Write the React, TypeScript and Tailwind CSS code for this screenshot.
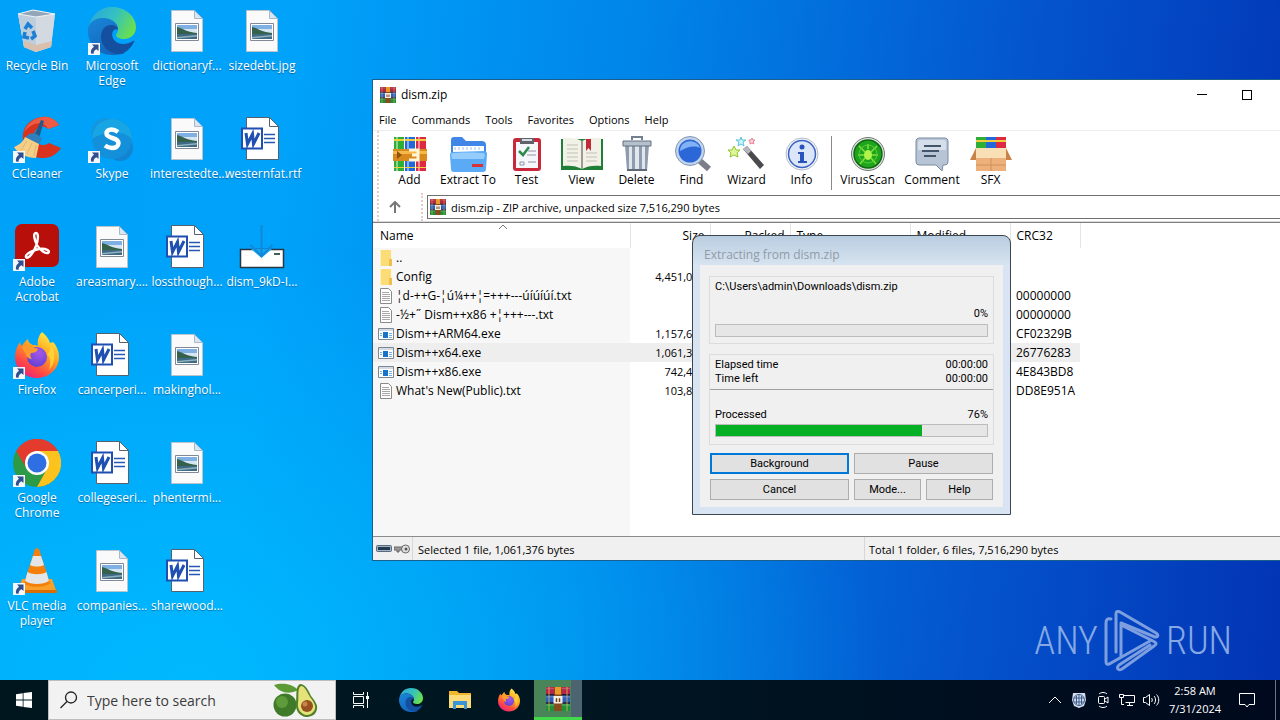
import type { ReactNode } from "react";

const UI_FONT = "font-['Open_Sans','Noto_Sans',sans-serif]";

/* ---------- shared icons ---------- */

function Shortcut() {
  return (
    <svg viewBox="0 0 12 12" className="absolute bottom-0 left-0 h-3 w-3">
      <path d="M0 0h12v12H0z" fill="#f4f8fd" />
      <path d="M4 1.500h6.500V8L8.500 6.200C6.500 7 5.500 8.300 5.600 10.800L3 10.500C2.400 7.500 3.800 5.200 6 3.800z" fill="#2f4f8e" />
    </svg>
  );
}

function EdgeIcon({ className }: { className: string }) {
  return (
    <svg viewBox="0 0 48 48" className={className}>
      <defs>
        <linearGradient id="edgeTop" x1="0" y1="0.2" x2="1" y2="0.6">
          <stop offset="0" stopColor="#2aa8dc" />
          <stop offset="0.5" stopColor="#35c1c0" />
          <stop offset="1" stopColor="#6be04a" />
        </linearGradient>
        <linearGradient id="edgeLeft" x1="0" y1="0" x2="0.5" y2="1">
          <stop offset="0" stopColor="#1a86d8" />
          <stop offset="1" stopColor="#1267bd" />
        </linearGradient>
      </defs>
      <path d="M1 20C3 8 12 0 24 0c14 0 24 10 24 20 0 8-6 12-12 12-5 0-8-2-8-4 0-1 2-2 2-6 0-6-7-11-15-11C8 11 2 15 1 20z" fill="url(#edgeTop)" />
      <path d="M0 24C0 15 7 11 15 11c8 0 15 5 15 11-3-3-10-1-10 7 0 9 8 17 17 17-3 1.500-8 2-13 2C10 48 0 37 0 24z" fill="url(#edgeLeft)" />
      <path d="M13 30c0-7 4-12 10-12 4 0 7 2 7 5-2-1-3-1-4 0-3 3-2 8 1 11 4 4 12 4 18 0 1-.500 2 0 1 1-4 8-10 12-15 12-10 0-18-8-18-17z" fill="#144fa0" />
    </svg>
  );
}

function FirefoxIcon({ className }: { className: string }) {
  return (
    <svg viewBox="0 0 48 48" className={className}>
      <defs>
        <linearGradient id="foxBody" x1="0.8" y1="0" x2="0.2" y2="1">
          <stop offset="0" stopColor="#fff24a" />
          <stop offset="0.4" stopColor="#ffa51f" />
          <stop offset="0.75" stopColor="#ff4647" />
          <stop offset="1" stopColor="#e61c8a" />
        </linearGradient>
        <radialGradient id="foxGlobe" cx="0.6" cy="0.3" r="0.8">
          <stop offset="0" stopColor="#a657e8" />
          <stop offset="1" stopColor="#5b3fd0" />
        </radialGradient>
      </defs>
      <path d="M29 1c4 3 7 7 8 11 2-1 3-1 3-1 4 4 6 10 6 15 0 12-10 21-22 21S2 38 2 26c0-6 2-11 5-15 0 2 1 3 2 4 1-2 3-5 6-7 0 3 2 5 5 6 2 0 4 0 5 1-1-6 1-11 4-14z" fill="url(#foxBody)" />
      <circle cx="24" cy="26" r="10" fill="url(#foxGlobe)" />
      <path d="M9 15c3-1 7 0 10 2 3 0 5 0 6 1-1 3-4 4-7 4-1 2-1 4 1 6-4 0-6-3-6-5-2-2-3-5-4-8z" fill="#ff9a2b" />
      <path d="M37 12c6 9 6 20-1 27 2-6 2-12-2-16 4-2 4-7 3-11z" fill="#ffd93b" opacity="0.8" />
    </svg>
  );
}

// closed stack of books, used for the window, the address bar and the taskbar
function RarIcon({ className }: { className: string }) {
  return (
    <svg viewBox="0 0 16 16" className={className}>
      <path d="M0 0h16v5H0z" fill="#b3264a" />
      <path d="M0 5.500h16v5H0z" fill="#2b5fc0" />
      <path d="M0 11h16v5H0z" fill="#1f8f3c" />
      <path d="M0 1h16M0 6.500h16M0 12h16" stroke="#ffffff" strokeOpacity="0.2" />
      <path d="M0 4.700h16v1H0zM0 10.200h16v1H0z" fill="#251936" />
      <path d="M1.500 0h1v16h-1zM13.500 0h1v16h-1z" fill="#e9c24a" opacity="0.5" />
      <path d="M5.500 0h5v16h-5z" fill="#8c4a1c" />
      <path d="M6 0h4v5H6z" fill="#eb9a29" />
      <path d="M5 6h6v5H5z" fill="#f5efe2" />
      <path d="M6.500 7.500h1V10h-1zM8.500 7.500h1V10h-1z" fill="#7c3b14" />
    </svg>
  );
}

/* ---------- desktop icons ---------- */

function RecycleBin() {
  return (
    <svg viewBox="0 0 48 48" className="h-12 w-12">
      <path d="M5 7 20 3l22 4-4 33-15 5-12-5z" fill="#b9c6d3" />
      <path d="M5 7l18 3 19-3-4 33-15 5-12-5z" fill="#d2d9e0" />
      <path d="M5 7l18 3v35l-12-5z" fill="#bccddb" />
      <path d="M11 34l12 4 16-4-1 6-15 5-12-5z" fill="#d8bfae" />
      <path d="M5 7 20 3l22 4-19 3z" fill="#93a6b7" stroke="#eef4f8" />
      <g fill="none" stroke="#1b7fd6" strokeWidth="3.500">
        <path d="M12 22l3-5 4 4" />
        <path d="M20 24l2 5-4 3" />
        <path d="M16 31l-5-1 1-5" />
      </g>
    </svg>
  );
}

function CCleaner() {
  return (
    <svg viewBox="0 0 48 48" className="h-12 w-12">
      <path d="M46 10C42 4 36 1 30 2 17 3 9 12 10 24c1 12 10 20 21 19 7 0 13-4 17-10l-12-5c-7 5-15 0-15-7s7-13 14-7z" fill="#d9321f" />
      <path d="M46 10C42 4 36 1 30 2 22 3 14 8 11 17c8-10 20-12 24-3z" fill="#ef5b42" />
      <path d="M28 5l3 1-5 17-5-2z" fill="#24598a" />
      <path d="M16 19c4-2 10 0 13 5l-3 5-14-6z" fill="#2f80bd" />
      <path d="M12 22l14 7-3 14c-9 0-18-4-22-11 5-2 9-5 11-10z" fill="#f5cf88" />
      <path d="M14 26l-6 9M19 28l-5 11M23 30l-2 11" stroke="#e5b76c" />
    </svg>
  );
}

function Skype() {
  return (
    <svg viewBox="0 0 48 48" className="h-12 w-12">
      <circle cx="17" cy="17" r="14" fill="#1496e0" />
      <circle cx="32" cy="33" r="13" fill="#1284d2" />
      <circle cx="24" cy="24" r="20" fill="#1490db" />
      <path d="M4 24a20 20 0 0 1 40 0C34 14 16 16 4 24z" fill="#18a5e4" />
      <path d="M30 17c-2-1.500-4-2.500-6.500-2.500-3 0-5 1.500-5 4 0 5.500 12 3.500 12 9.500 0 3.500-3 5-6.500 5-3 0-5-1-7-2.500" fill="none" stroke="#ffffff" strokeWidth="4.500" />
    </svg>
  );
}

function Acrobat() {
  return (
    <svg viewBox="0 0 48 48" className="h-12 w-12">
      <rect x="2" y="1" width="44" height="43" rx="7" fill="#b80f0a" />
      <path d="M23 10c-3 0-2 6 1 12 3 5 8 9 11 8 3-2-2-5-9-4-6 1-14 5-13 8 2 3 8-5 10-11 2-5 3-13 0-13z" fill="none" stroke="#ffffff" strokeWidth="2.400" />
    </svg>
  );
}

function Chrome() {
  return (
    <svg viewBox="0 0 48 48" className="h-12 w-12">
      <circle cx="24" cy="24" r="24" fill="#2d9a47" />
      <path d="M24 12h21A24 24 0 0 1 24 48l10-18z" fill="#fcc31e" />
      <path d="M3.200 12A24 24 0 0 1 45 12H24L14 30z" fill="#e33b2e" />
      <circle cx="24" cy="24" r="12" fill="#ffffff" />
      <circle cx="24" cy="24" r="9.500" fill="#2f6fe4" />
    </svg>
  );
}

function Vlc() {
  return (
    <svg viewBox="0 0 48 48" className="h-12 w-12">
      <path d="M9 32h30l5 14H4z" fill="#f9a02a" />
      <path d="M4 43h40v3H4z" fill="#d86c05" />
      <path d="M22 2c1-1 3-1 4 0l11 34c-4 5-22 5-26 0z" fill="#f47f0a" />
      <path d="M20 9h8l3 9c-4 2-10 2-14 0z" fill="#e3e5e6" />
      <path d="M14.500 25c5 3 14 3 19 0l2.500 9c-6 4-18 4-24 0z" fill="#e3e5e6" />
    </svg>
  );
}

function ImageFile() {
  return (
    <svg viewBox="0 0 48 48" className="h-12 w-12">
      <path d="M8.500 3.500h23l8 8v33h-31z" fill="#fafafa" stroke="#b9c4cd" />
      <path d="M31.500 3.500v8h8z" fill="#d9e6f2" stroke="#a6b9ca" />
      <path d="M12.500 16.500h23v17h-23z" fill="#ffffff" stroke="#7f8a96" />
      <path d="M14 18h20v14H14z" fill="#7fb0e4" />
      <path d="M14 22h20v4H14z" fill="#d5e6f3" />
      <path d="M14 20c5 1 9 5 20 6v2H14z" fill="#35604a" />
      <path d="M14 27h20v5H14z" fill="#3f6a86" />
      <path d="M14 30l20-2v1.500L14 31.500z" fill="#8fb1bd" />
    </svg>
  );
}

function WordFile() {
  return (
    <svg viewBox="0 0 48 48" className="h-12 w-12">
      <path d="M8.500 2.500h23l9 9v33h-32z" fill="#ffffff" stroke="#54616e" />
      <path d="M31.500 2.500v9h9z" fill="#ffffff" stroke="#54616e" />
      <path d="M26 19.500h11M26 23.500h11M26 27.500h11" stroke="#2558b3" strokeWidth="1.500" />
      <path d="M4 13.500h20v20H4z" fill="#ffffff" stroke="#1f4fb0" strokeWidth="2" />
      <path d="M8 18l1.500 11 5-10 1 10 5.500-11" fill="none" stroke="#1f4fb0" strokeWidth="3" />
    </svg>
  );
}

function Installer() {
  return (
    <svg viewBox="0 0 48 48" className="h-12 w-12">
      <path d="M2.500 26.500h43v18h-43z" fill="#ffffff" stroke="#273746" strokeWidth="1.500" />
      <path d="M13 26h21L23.500 35z" fill="#16a7f2" />
      <path d="M23.500 2v31M12.500 22l11 11 11-11" fill="none" stroke="#1287d8" strokeWidth="2" />
      <path d="M36 30h6v2h-6z" fill="#3f5f58" />
    </svg>
  );
}

type DesktopItem = { label: string; icon: ReactNode; shortcut?: boolean };

const DESKTOP: DesktopItem[] = [
  { label: "Recycle Bin", icon: <RecycleBin /> },
  { label: "CCleaner", icon: <CCleaner />, shortcut: true },
  { label: "Adobe Acrobat", icon: <Acrobat />, shortcut: true },
  { label: "Firefox", icon: <FirefoxIcon className="h-12 w-12" />, shortcut: true },
  { label: "Google Chrome", icon: <Chrome />, shortcut: true },
  { label: "VLC media player", icon: <Vlc />, shortcut: true },
  { label: "Microsoft Edge", icon: <EdgeIcon className="h-12 w-12" />, shortcut: true },
  { label: "Skype", icon: <Skype />, shortcut: true },
  { label: "areasmary....", icon: <ImageFile /> },
  { label: "cancerperi...", icon: <WordFile /> },
  { label: "collegeseri...", icon: <WordFile /> },
  { label: "companies...", icon: <ImageFile /> },
  { label: "dictionaryf...", icon: <ImageFile /> },
  { label: "interestedte...", icon: <ImageFile /> },
  { label: "lossthough...", icon: <WordFile /> },
  { label: "makinghol...", icon: <ImageFile /> },
  { label: "phentermi...", icon: <ImageFile /> },
  { label: "sharewood...", icon: <WordFile /> },
  { label: "sizedebt.jpg", icon: <ImageFile /> },
  { label: "westernfat.rtf", icon: <WordFile /> },
  { label: "dism_9kD-I...", icon: <Installer /> },
];

function DesktopIcons() {
  return (
    <div className="grid w-fit auto-cols-[75px] grid-flow-col grid-rows-[repeat(6,108px)]">
      {DESKTOP.map((item) => (
        <button key={item.label} className="flex flex-col items-center pt-[7px] pr-px">
          <span className="relative">
            {item.icon}
            {item.shortcut && <Shortcut />}
          </span>
          <span className="mt-[3px] w-[74px] text-center text-[12px] leading-[15px] text-white [text-shadow:0_1px_1px_rgba(0,40,90,0.5)]">
            {item.label}
          </span>
        </button>
      ))}
    </div>
  );
}

/* ---------- archive window ---------- */

const TOOL_ICONS: Record<string, ReactNode> = {
  Add: (
    <>
      <path d="M2 1h10v34H2z" fill="#2fae35" />
      <path d="M13 1h10v34H13z" fill="#2368d8" />
      <path d="M24 1h10v34H24z" fill="#dd2a42" />
      <path d="M4 1h2v34H4zM15 1h2v34h-2zM26 1h2v34h-2z" fill="#ffffff" opacity="0.45" />
      <path d="M2 3h10v2H2zM13 3h10v2H13zM24 3h10v2H24zM2 31h10v1H2zM13 31h10v1H13zM24 31h10v1H24z" fill="#f1cf3c" />
      <path d="M1 13h34v12H1z" fill="#d98a1c" />
      <path d="M1 15h34v3H1z" fill="#f6b849" />
      <path d="M5 15l5 4-5 4z" fill="#8c5411" />
      <path d="M17 14h9v10h-9M20 19h6" fill="none" stroke="#fff6dc" strokeWidth="3" />
    </>
  ),
  "Extract To": (
    <>
      <path d="M1 4c0-2 1-3 3-3h8l4 4h16c2 0 4 1 4 4v20H1z" fill="#3f86e6" />
      <path d="M3 10h31v10H3z" fill="#ffffff" />
      <path d="M5 11v3M9 11v3M13 11v3M17 11v3M21 11v3M25 11v3M29 11v3" stroke="#9dc0e8" />
      <path d="M0 19c0-2 1-3 3-3l31-1c2 0 3 1 3 3l-1 15c0 2-1 3-3 3H4c-2 0-3-1-3-3z" fill="#5aaaf5" />
      <path d="M1 18c1-2 33-2 34 0l-1 5H2z" fill="#94cdfb" />
      <path d="M22 28h11v3H22z" fill="#d83238" />
    </>
  ),
  Test: (
    <>
      <rect x="4" y="2" width="28" height="33" rx="3" fill="#c9283b" />
      <path d="M7 6h22v26H7z" fill="#f6f7fa" />
      <path d="M11 2h14v6H11z" fill="#60626b" />
      <path d="M13 3h10v2H13z" fill="#d9dbe2" />
      <path d="M10 15l4 4 6-8" fill="none" stroke="#2a8b4a" strokeWidth="2.500" />
      <path d="M11 26h4v3h-4z" fill="none" stroke="#8d94a5" />
      <path d="M19 15h8M18 19h9M19 26h8" stroke="#8d94a5" />
    </>
  ),
  View: (
    <>
      <path d="M-3 3h42v31H-3z" fill="#1f7f37" />
      <path d="M-1 2c7-1 14 0 19 3 5-3 12-4 19-3v28c-7-1-14 0-19 3-5-3-12-4-19-3z" fill="#f2f1e8" />
      <path d="M18 5v28" stroke="#9c9b8e" strokeWidth="2" />
      <path d="M3 9h11M3 13h11M3 17h11M3 21h11M3 25h11M22 17h11M22 21h11M22 25h11" stroke="#c2c1b5" />
      <path d="M22 3h5v12l-2.500-3L22 15z" fill="#c12a34" />
    </>
  ),
  Delete: (
    <>
      <path d="M6 9h24l-2 26H8z" fill="#8e9cae" />
      <path d="M10 10h3v24h-3zM16 10h4v24h-4zM23 10h3v24h-3z" fill="#dfe6ee" />
      <path d="M4 5h28v5H4z" fill="#b5c0cd" stroke="#65717f" />
      <path d="M13 4V1h10v3" fill="none" stroke="#75808e" strokeWidth="2" />
      <path d="M8 34h20" stroke="#5e6977" strokeWidth="2" />
    </>
  ),
  Find: (
    <>
      <path d="M26 25l9 8" stroke="#7d7f88" strokeWidth="6" />
      <circle cx="16" cy="15" r="13" fill="#2c67d8" stroke="#c3d4ea" strokeWidth="3" />
      <path d="M6 15c0-12 17-13 20-3-6-3-13-1-20 3z" fill="#80b2f5" />
      <circle cx="16" cy="15" r="14.500" fill="none" stroke="#7f96b8" />
    </>
  ),
  Wizard: (
    <>
      <path d="M14 13l4-3 17 19-4 4z" fill="#4a4a4e" />
      <path d="M14 13l4-3 4 5-3 3z" fill="#b7b8bd" />
      <path d="M5 10l2 4 4 0-3 3 1 4-4-2-4 2 1-4-3-3h4z" fill="#dff79a" stroke="#8fc62c" />
      <path d="M12 1l1 3h4l-3 2 1 4-3-2-3 2 1-4-3-2h4z" fill="#d4f4fb" stroke="#5bc5dc" />
      <path d="M23 2l1 2h2l-2 2 1 2-2-1-2 1 0-2-1-2h2z" fill="#fbd5dd" stroke="#ec7f93" />
    </>
  ),
  Info: (
    <>
      <circle cx="18" cy="18" r="16" fill="#f6f8fb" stroke="#b3bccb" />
      <circle cx="18" cy="18" r="13.500" fill="#dbe6f8" stroke="#3a62c4" strokeWidth="1.500" />
      <circle cx="18" cy="11" r="2.500" fill="#2a52bd" />
      <path d="M14 16h6v9h3v2h-9v-2h2v-7h-2z" fill="#2a52bd" />
    </>
  ),
  VirusScan: (
    <>
      <circle cx="18" cy="18" r="16.500" fill="#dfe5df" stroke="#6f7b70" />
      <circle cx="18" cy="18" r="14" fill="#1ea51d" stroke="#116813" strokeWidth="1.500" />
      <ellipse cx="18" cy="19" rx="4" ry="5" fill="#b2f34a" />
      <path d="M9 10l6 6M27 10l-6 6M8 19h6M22 19h6M10 28l5-6M26 28l-5-6M18 8v5" stroke="#84df3c" strokeWidth="1.500" />
      <circle cx="18" cy="18" r="9" fill="none" stroke="#57cc35" />
    </>
  ),
  Comment: (
    <>
      <path d="M6 2h24c3 0 4 1 4 4v19c0 3-1 4-4 4h-1l-1 6-6-6H6c-3 0-4-1-4-4V6c0-3 1-4 4-4z" fill="#b6c4d6" stroke="#7b8b9f" />
      <path d="M6 4h24c1 0 2 1 2 3v7H4V7c0-2 1-3 2-3z" fill="#d5dfea" />
      <path d="M10 10h17M8 15h17M10 20h12" stroke="#44556b" strokeWidth="2" />
    </>
  ),
  SFX: (
    <>
      <path d="M3 1h10v14H3z" fill="#2fae35" />
      <path d="M13 1h10v14H13z" fill="#2368d8" />
      <path d="M23 1h10v14H23z" fill="#dd2a42" />
      <path d="M3 4h30v2H3z" fill="#f1cf3c" />
      <path d="M3 13h30v22H3z" fill="#eeb07a" />
      <path d="M3 12h30l4 10H-1z" fill="#f8dfb6" />
      <path d="M3 12l-6 12h6zM33 12l6 12h-6z" fill="#c98348" />
      <path d="M18 22v13M3 29h30" stroke="#d0905a" />
    </>
  ),
};

const TOOLS_MAIN = ["Test", "View", "Delete", "Find", "Wizard", "Info"];

function ToolButton({ name, className }: { name: string; className: string }) {
  return (
    <button className={`flex flex-col items-center ${className}`}>
      <svg viewBox="-3 0 42 36" className="h-9 w-[42px]">
        {TOOL_ICONS[name]}
      </svg>
      <span className="leading-4">{name}</span>
    </button>
  );
}

type Kind = "dir" | "txt" | "exe";

const FILES: { name: string; kind: Kind; size: string; crc: string }[] = [
  { name: "..", kind: "dir", size: "", crc: "" },
  { name: "Config", kind: "dir", size: "4,451,072", crc: "" },
  { name: "¦d-++G-¦ú¼++¦=+++---úíúíúí.txt", kind: "txt", size: "", crc: "00000000" },
  { name: "-½+˝ Dism++x86 +¦+++---.txt", kind: "txt", size: "", crc: "00000000" },
  { name: "Dism++ARM64.exe", kind: "exe", size: "1,157,632", crc: "CF02329B" },
  { name: "Dism++x64.exe", kind: "exe", size: "1,061,376", crc: "26776283" },
  { name: "Dism++x86.exe", kind: "exe", size: "742,400", crc: "4E843BD8" },
  { name: "What's New(Public).txt", kind: "txt", size: "103,810", crc: "DD8E951A" },
];

function FileIcon({ kind }: { kind: Kind }) {
  return (
    <svg viewBox="0 0 16 16" className="h-4 w-4 shrink-0">
      {kind === "dir" && (
        <>
          <path d="M2 0h11v16H2z" fill="#fbdc76" />
          <path d="M11 9h3v7h-3z" fill="#eebf4b" />
          <path d="M2 0h1v16H2z" fill="#fff0b5" />
        </>
      )}
      {kind === "txt" && (
        <>
          <path d="M2.500.500h8l3 3v12h-11z" fill="#ffffff" stroke="#8a8a8a" />
          <path d="M4 4.500h7M4 6.500h8M4 8.500h8M4 10.500h8M4 12.500h8" stroke="#a8a8a8" />
        </>
      )}
      {kind === "exe" && (
        <>
          <path d="M.500 2.500h15v11H.500z" fill="#ffffff" stroke="#7c8791" />
          <path d="M1 3h14v2H1z" fill="#d3dce4" />
          <path d="M5 6h5v6H5z" fill="#1874c9" />
          <path d="M11 7.500h3M11 9.500h3M11 11.500h3M2 7.500h2M2 9.500h2" stroke="#6bb0e6" />
        </>
      )}
    </svg>
  );
}

function FileTable() {
  return (
    <div className="relative min-h-0 flex-1 bg-[linear-gradient(to_right,#f7f7f7_257px,#ffffff_257px)]">
      <svg viewBox="0 0 8 4" className="absolute top-[2px] left-[126px] h-1 w-2">
        <path d="M0 4l4-4 4 4" fill="none" stroke="#777777" />
      </svg>
      <div className="bg-white">
        <table className="w-[707px] table-fixed border-collapse text-left">
          <thead>
            <tr className="h-[25px] *:border-r *:border-[#e5e5e5] *:font-normal">
              <th className="w-[257px] pl-[7px]">Name</th>
              <th className="w-20 pr-[5px] text-right">Size</th>
              <th className="w-20 pr-[5px] text-right">Packed</th>
              <th className="w-[120px] pl-[6px]">Type</th>
              <th className="w-[100px] pl-[6px]">Modified</th>
              <th className="w-[70px] pl-[6px]">CRC32</th>
            </tr>
          </thead>
          <tbody className="bg-[linear-gradient(to_right,#f7f7f7_257px,#ffffff_257px)]">
            {FILES.map((file) => (
              <tr key={file.name} className={file.name === "Dism++x64.exe" ? "h-[19px] bg-[#eeeeee]" : "h-[19px]"}>
                <td className="pl-[5px]">
                  <span className="flex items-center gap-[2px] whitespace-nowrap">
                    <FileIcon kind={file.kind} />
                    {file.name}
                  </span>
                </td>
                <td className="pr-[5px] text-right text-[11px]">{file.size}</td>
                <td />
                <td />
                <td />
                <td className="pl-[6px]">{file.crc}</td>
              </tr>
            ))}
          </tbody>
        </table>
      </div>
    </div>
  );
}

function ArchiveWindow() {
  return (
    <section
      aria-label="dism.zip"
      className="absolute top-[79px] -right-9 left-[372px] flex h-[482px] flex-col border border-[#1b5f8f] bg-white text-[12px] leading-4 text-black"
    >
      <header className="flex h-[29px] shrink-0 items-center pl-[7px]">
        <RarIcon className="h-4 w-4" />
        <h1 className="ml-[5px] flex-1">dism.zip</h1>
        <button aria-label="Minimize" className="flex h-full w-[45px] items-center justify-center">
          <span className="h-px w-[10px] bg-black" />
        </button>
        <button aria-label="Maximize" className="flex h-full w-[45px] items-center justify-center">
          <span className="h-[10px] w-[10px] border border-black" />
        </button>
        <button aria-label="Close" className="h-full w-[46px]" />
      </header>

      <nav className="flex h-[22px] shrink-0 items-center gap-[15px] border-b border-[#ececec] pl-[6px] text-[11px]">
        {["File", "Commands", "Tools", "Favorites", "Options", "Help"].map((item) => (
          <button key={item}>{item}</button>
        ))}
      </nav>

      <div className="ml-1 shrink-0 border-l-2 border-dotted border-[#e3cccc]">
        <div className="flex h-[62px] items-start pt-[5px] pl-[3px]">
          <ToolButton name="Add" className="w-[55px]" />
          <ToolButton name="Extract To" className="w-[62px]" />
          {TOOLS_MAIN.map((name) => (
            <ToolButton key={name} name={name} className="w-[55px]" />
          ))}
          <span className="mx-[2px] h-[54px] w-px bg-[#8a8a8a]" />
          <ToolButton name="VirusScan" className="w-[67px]" />
          <ToolButton name="Comment" className="w-[62px]" />
          <ToolButton name="SFX" className="w-[55px]" />
        </div>
        <div className="flex h-7 items-center">
          <button aria-label="Up one level" className="flex h-full w-[42px] items-center pl-[10px]">
            <svg viewBox="0 0 12 12" className="h-3 w-3">
              <path d="M6 12V1M1 6l5-5 5 5" fill="none" stroke="#777777" strokeWidth="2" />
            </svg>
          </button>
          <div className="flex h-full flex-1 items-center border-l-2 border-dotted border-[#e3cccc] pl-1">
            <label className="flex h-6 flex-1 items-center gap-[5px] border border-[#707070] pl-[2px]">
              <RarIcon className="h-4 w-4" />
              <input
                aria-label="Archive path"
                readOnly
                value="dism.zip - ZIP archive, unpacked size 7,516,290 bytes"
                className="h-full flex-1 text-[11px] outline-none"
              />
            </label>
          </div>
        </div>
      </div>

      <div className="h-[2px] shrink-0 border-b border-[#808080] bg-[#d9d9d9]" />
      <FileTable />

      <footer className="flex h-6 shrink-0 items-stretch border-t border-[#8c8c8c] bg-[#f0f0f0] text-[11px]">
        <div className="flex w-10 items-center gap-[2px] border-r border-[#d7d7d7] pl-[3px]">
          <svg viewBox="0 0 16 10" className="h-[10px] w-4">
            <rect x="0.5" y="1.5" width="15" height="6" rx="1" fill="#9fb2c6" stroke="#5c6b7b" />
            <path d="M2 3h12v3H2z" fill="#23394f" />
          </svg>
          <svg viewBox="0 0 16 10" className="h-[10px] w-4">
            <path d="M0 3h9v3H5v2H3V6H0z" fill="#9a9a9a" stroke="#666666" />
            <circle cx="11.500" cy="5" r="4" fill="#e2e2e2" stroke="#666666" />
            <circle cx="12" cy="5" r="1.500" fill="#555555" />
          </svg>
        </div>
        <p className="flex w-[452px] items-center border-r border-[#d7d7d7] pt-[3px] pl-[5px]">
          Selected 1 file, 1,061,376 bytes
        </p>
        <p className="flex items-center pt-[3px] pl-1">Total 1 folder, 6 files, 7,516,290 bytes</p>
      </footer>
    </section>
  );
}

/* ---------- extraction dialog ---------- */

function Bar({ label, value }: { label: string; value: number }) {
  return (
    <div
      role="progressbar"
      aria-label={label}
      aria-valuenow={value}
      className="h-[13px] border border-[#bcbcbc] bg-[#e6e6e6]"
    >
      <div className="h-full bg-[#06b025]" style={{ width: `${value}%` }} />
    </div>
  );
}

function DialogButton({ children, primary }: { children: string; primary?: boolean }) {
  return (
    <button
      className={
        primary
          ? "h-[21px] flex-1 border-2 border-[#0078d7] bg-[#e1e1e1] leading-4"
          : "h-[21px] flex-1 border border-[#adadad] bg-[#e1e1e1] leading-4"
      }
    >
      {children}
    </button>
  );
}

function ExtractDialog() {
  return (
    <section
      role="dialog"
      aria-label="Extracting from dism.zip"
      className="absolute top-[235px] left-[692px] w-[319px] rounded-t-lg border border-[#3c4650] bg-[linear-gradient(#b9cde0,#d8e4f1_30px)] px-[7px] pb-[7px] text-black"
    >
      <h2 className="flex h-[29px] items-center px-1 pt-2 text-[12px] leading-4 text-[#8f9ba7]">
        Extracting from dism.zip
      </h2>
      <div className="bg-[#f0f0f0] px-[9px] pt-[11px] pb-[7px] font-[Roboto,'Open_Sans',sans-serif] text-[11px] leading-[14px]">
        <div className="h-[68px] border border-[#dcdcdc] px-[5px] pt-[3px]">
          <p>C:\Users\admin\Downloads\dism.zip</p>
          <p className="mt-[13px] mb-[3px] text-right">0%</p>
          <Bar label="Current file" value={0} />
        </div>
        <div className="mt-[10px] h-[91px] border border-[#dcdcdc] pt-[3px]">
          <dl className="grid grid-cols-[1fr_auto] border-b border-[#a0a0a0] px-[5px] pb-[3px]">
            <dt>Elapsed time</dt>
            <dd>00:00:00</dd>
            <dt>Time left</dt>
            <dd>00:00:00</dd>
          </dl>
          <div className="px-[5px] pt-[18px]">
            <p className="mb-[2px] flex justify-between">
              <span>Processed</span>
              <span>76%</span>
            </p>
            <Bar label="Processed" value={76} />
          </div>
        </div>
        <div className="mt-2 grid grid-cols-2 gap-[5px] px-px">
          <DialogButton primary>Background</DialogButton>
          <DialogButton>Pause</DialogButton>
          <DialogButton>Cancel</DialogButton>
          <div className="flex gap-[5px]">
            <DialogButton>Mode...</DialogButton>
            <DialogButton>Help</DialogButton>
          </div>
        </div>
      </div>
    </section>
  );
}

/* ---------- watermark and taskbar ---------- */

function Watermark() {
  return (
    <div className="absolute right-12 bottom-[7px] flex h-16 items-center gap-[6px] font-['Roboto_Condensed','Liberation_Sans_Narrow',Roboto,sans-serif] text-[38px] leading-none font-light text-[#86a9e4]">
      <span>ANY</span>
      <svg viewBox="0 0 56 62" className="h-[62px] w-14" fill="none" stroke="#7d9fe0" strokeWidth="3" strokeLinejoin="round" strokeLinecap="round">
        <path d="M7 9c-4-1-5 1-5 4v38c0 4 2 4 5 2l39-22" />
        <path d="M12 42V4c0-3 2-3 4-2l36 21c3 2 2 4-1 4L17 13" />
        <path d="M17 15v31M17 15l32 16c4 2 4 3 1 5L18 59c-4 2-6-1-3-4l31-20" />
      </svg>
      <span>RUN</span>
    </div>
  );
}

function Avocado() {
  return (
    <svg viewBox="0 0 46 36" className="h-9 w-[46px]">
      <path d="M1 3c7-2 17-2 24 5-9 5-18 3-24-5z" fill="#5b9a35" />
      <circle cx="12" cy="23" r="11.500" fill="#3f7a28" />
      <circle cx="9" cy="20" r="6" fill="#5d9b3b" />
      <path d="M27 2c5 0 8 5 11 12 4 5 7 9 6 13-1 6-6 8-11 8-7-1-11-7-10-15 1-5-1-16 4-18z" fill="#4f7f27" />
      <path d="M28 4c4 0 6 6 9 11 4 5 6 9 5 12-2 5-6 6-9 6-5-1-9-6-8-12 1-6-1-15 3-17z" fill="#e5e27a" />
      <circle cx="34" cy="24" r="6" fill="#97501f" />
      <circle cx="32" cy="22" r="2.500" fill="#c88348" />
    </svg>
  );
}

function TaskButton({ label, className, children }: { label: string; className: string; children: ReactNode }) {
  return (
    <button aria-label={label} className={`flex h-10 items-center justify-center ${className}`}>
      {children}
    </button>
  );
}

function TrayIcons() {
  return (
    <>
      <button aria-label="Show hidden icons" className="flex w-6 justify-center">
        <svg viewBox="0 0 14 8" className="h-2 w-[14px]" fill="none" stroke="#ffffff">
          <path d="M1 7l6-6 6 6" />
        </svg>
      </button>
      <button aria-label="Network guard" className="flex w-6 justify-center">
        <svg viewBox="0 0 16 16" className="h-4 w-4" fill="none" stroke="#3f5e8f">
          <path d="M2 1h12l1 7-2 6-5 2-5-2-2-6z" fill="#d3dcea" stroke="none" />
          <circle cx="8" cy="8" r="5.500" />
          <path d="M3 6h10M3 10h10M8 2.500v11M5.500 4v8M10.500 4v8" />
        </svg>
      </button>
      <button aria-label="Meet Now" className="flex w-6 justify-center">
        <svg viewBox="0 0 16 16" className="h-4 w-4" fill="none" stroke="#ffffff">
          <rect x="3.500" y="4.500" width="6" height="7" rx="1" />
          <path d="M10 7l3-2v6l-3-2M4 2c2-2 6-2 8 0M4 14c2 2 6 2 8 0" />
        </svg>
      </button>
      <button aria-label="Network" className="flex w-6 justify-center">
        <svg viewBox="0 0 16 16" className="h-4 w-4" fill="none" stroke="#ffffff">
          <path d="M4.500 3.500h11v7h-9M8 13.500h6M10.500 11v2" />
          <path d="M.500 2.500h4v3h-4zM2.500 6v6.500H5" />
        </svg>
      </button>
      <button aria-label="Volume" className="flex w-6 justify-center">
        <svg viewBox="0 0 18 16" className="h-4 w-[18px]" fill="none" stroke="#ffffff">
          <path d="M1.500 5.500h2l4-3v11l-4-3h-2zM9.500 6c1 1 1 3 0 4M12 4c2 2 2 6 0 8M14.500 2.500c3 3 3 8 0 11" />
        </svg>
      </button>
    </>
  );
}

function Taskbar() {
  return (
    <footer className="relative flex h-10 shrink-0 items-center bg-[linear-gradient(to_right,#00161f,#001621_45%,#00091d)] text-white">
      <TaskButton label="Start" className="w-12">
        <svg viewBox="0 0 16 16" className="h-4 w-4" fill="#ffffff">
          <path d="M0 2.200 6.700 1.300v6.300H0zM7.500 1.100 16 0v7.600H7.500zM0 8.400h6.700v6.300L0 13.800zM7.500 8.400H16V16l-8.500-1.100z" />
        </svg>
      </TaskButton>
      <label className="flex h-10 w-72 items-center border border-[#bdbdbd] bg-[#f2f2f2] pr-4 pl-[11px]">
        <svg viewBox="0 0 18 18" className="h-[18px] w-[18px]" fill="none" stroke="#222222" strokeWidth="1.300">
          <circle cx="11" cy="6.500" r="5.500" />
          <path d="M7 10.500.500 17" />
        </svg>
        <input
          aria-label="Search"
          placeholder="Type here to search"
          className="ml-[9px] min-w-0 flex-1 text-[14px] text-black outline-none placeholder:text-[#3c3c3c]"
        />
        <Avocado />
      </label>
      <div className="flex gap-px">
        <TaskButton label="Task view" className="w-[50px]">
          <svg viewBox="0 0 18 16" className="h-4 w-[18px]" fill="none" stroke="#ffffff">
            <path d="M1.500 0v2.500h10V0M1.500 4.500h10v7h-10zM1.500 16v-2.500h10V16M15.500 0v16" />
            <path d="M14 4h3v3h-3z" fill="#ffffff" stroke="none" />
          </svg>
        </TaskButton>
        <TaskButton label="Microsoft Edge" className="w-12">
          <EdgeIcon className="h-6 w-6" />
        </TaskButton>
        <TaskButton label="File Explorer" className="w-12">
          <svg viewBox="0 0 22 20" className="h-5 w-[22px]">
            <path d="M0 1h8l2 2h12v15H0z" fill="#f2b62d" />
            <path d="M0 5h22v13H0z" fill="#fcdb78" />
            <path d="M4 11h14v8h-3v-4H7v4H4z" fill="#3a94d6" />
          </svg>
        </TaskButton>
        <TaskButton label="Mozilla Firefox" className="w-12">
          <FirefoxIcon className="h-6 w-6" />
        </TaskButton>
        <TaskButton
          label="WinRAR"
          className="w-12 border-b-[3px] border-[#41d94b] bg-[linear-gradient(to_right,#498558_37px,#4b6470_37px)]"
        >
          <RarIcon className="h-6 w-6" />
        </TaskButton>
      </div>
      <div className="ml-auto flex items-center">
        <TrayIcons />
        <time className="w-16 text-center text-[11px] leading-[18px]">
          2:58 AM
          <br />
          7/31/2024
        </time>
        <TaskButton label="Notifications" className="mr-2 w-10">
          <svg viewBox="0 0 16 16" className="h-4 w-4" fill="none" stroke="#ffffff">
            <path d="M.500 1.500h15v11H10l-2 2.500-2-2.500H.500z" />
          </svg>
        </TaskButton>
        <span className="h-10 w-[5px] border-l border-[#6c7683]" />
      </div>
    </footer>
  );
}

export default function App() {
  return (
    <div className={`flex h-screen flex-col overflow-hidden ${UI_FONT}`}>
      <main className="relative min-h-0 flex-1 bg-[radial-gradient(ellipse_at_15%_100%,rgba(0,190,255,0.8),transparent_45%),linear-gradient(97deg,#00a2f8_0%,#00a2fa_22%,#0084e8_48%,#0453cd_77%,#0234b4_100%)]">
        <DesktopIcons />
        <Watermark />
        <ArchiveWindow />
        <ExtractDialog />
      </main>
      <Taskbar />
    </div>
  );
}
